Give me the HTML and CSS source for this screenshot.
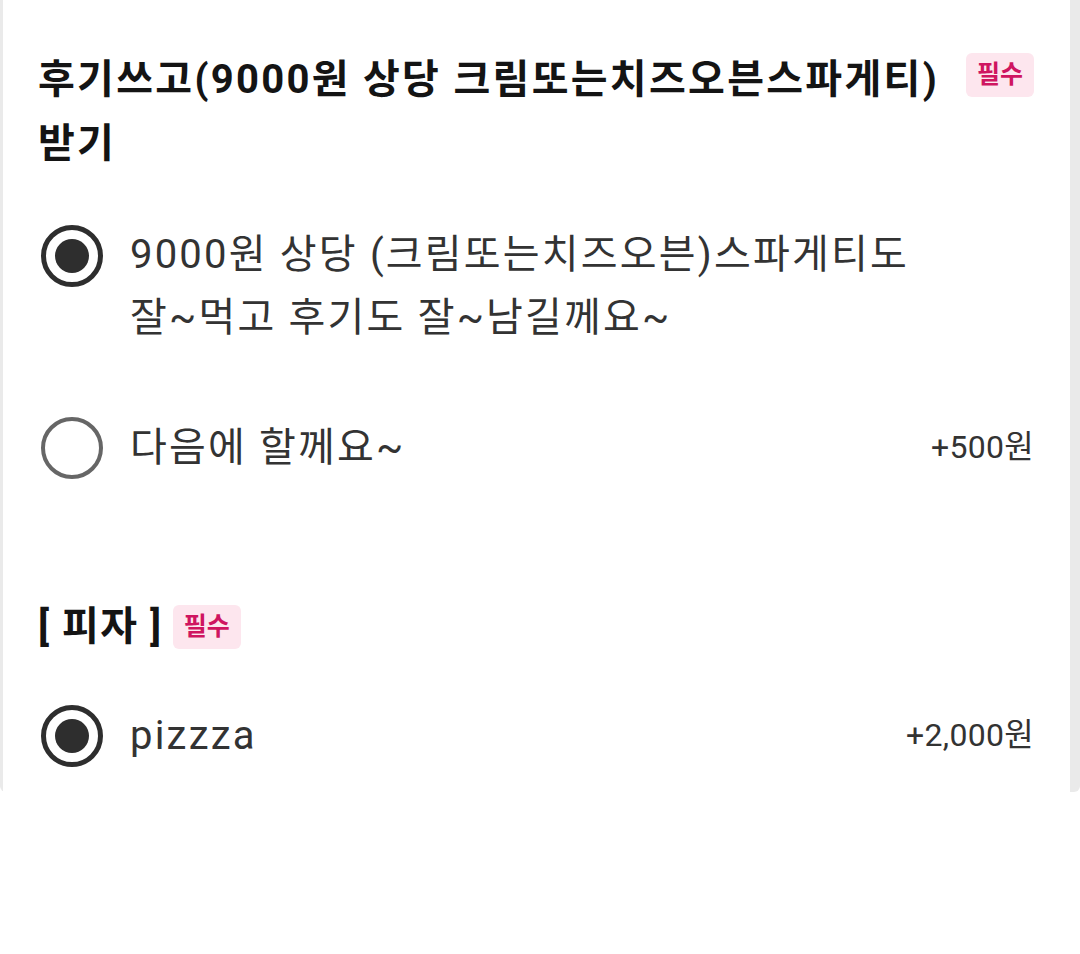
FILE: index.html
```html
<!DOCTYPE html>
<html lang="ko">
<head>
<meta charset="utf-8">
<link rel="stylesheet" href="styles.css">
</head>
<body>
<div class="frame">
  <div class="card">
    <section class="group group-first">
      <div class="group-head">
        <h2 class="group-title">후기쓰고(9000원 상당 크림또는치즈오븐스파게티) 받기</h2>
        <span class="badge">필수</span>
      </div>
      <ul class="options">
        <li class="option option-tall">
          <span class="radio checked"></span>
          <span class="option-label">9000원 상당 (크림또는치즈오븐)스파게티도<br>잘~먹고 후기도 잘~남길께요~</span>
        </li>
        <li class="option option-second">
          <span class="radio"></span>
          <span class="option-label">다음에 할께요~</span>
          <span class="price">+500원</span>
        </li>
      </ul>
    </section>
    <section class="group group-second">
      <div class="group-head">
        <h2 class="group-title group-title-short">[ 피자 ]</h2>
        <span class="badge badge-inline">필수</span>
      </div>
      <ul class="options">
        <li class="option option-pizza">
          <span class="radio checked"></span>
          <span class="option-label">pizzza</span>
          <span class="price">+2,000원</span>
        </li>
      </ul>
    </section>
  </div>
</div>
</body>
</html>
```

FILE: styles.css
```css
html, body {
  margin: 0;
  padding: 0;
  background: #ffffff;
}

body {
  font-family: Roboto, "Noto Sans CJK KR", "Noto Sans", sans-serif;
  color: #333333;
}

.frame {
  background: #eaeaea;
  padding: 0 10px 0 3px;
  height: 792px;
  border-radius: 0 0 6px 6px;
  display: flex;
}

.card {
  flex: 1;
  background: #ffffff;
  padding: 0 36px 0 35px;
}

.group-first {
  padding-top: 48px;
}

.group-head {
  display: flex;
  align-items: flex-start;
}

.group-title {
  margin: 0;
  flex: 1;
  font-size: 40px;
  font-weight: 700;
  line-height: 64px;
  letter-spacing: 2.3px;
  color: #141414;
  padding-right: 20px;
  word-break: keep-all;
}

.group-title-short {
  flex: 0 0 auto;
  padding-right: 10px;
  letter-spacing: 1.5px;
}

.badge {
  flex: 0 0 auto;
  margin-top: 5px;
  background: #fde6ee;
  color: #cf1560;
  font-size: 25px;
  font-weight: 700;
  line-height: 44px;
  height: 44px;
  padding: 0 11px;
  border-radius: 6px;
}

.badge-inline {
  margin-top: 10px;
}

.options {
  list-style: none;
  margin: 0;
  padding: 0;
}

.option {
  display: flex;
  align-items: center;
  font-size: 40px;
  line-height: 63px;
  letter-spacing: 2.2px;
}

.option-tall {
  align-items: flex-start;
  margin-top: 47px;
}

.option-tall .radio {
  margin-top: 2px;
}

.option-second {
  margin-top: 67px;
}

.option-pizza {
  margin-top: 45px;
}

.radio {
  flex: 0 0 auto;
  width: 62px;
  height: 62px;
  box-sizing: border-box;
  border: 4px solid #666666;
  border-radius: 50%;
  margin-left: 3px;
  margin-right: 27px;
  display: flex;
  align-items: center;
  justify-content: center;
}

.radio.checked {
  border: 5px solid #2e2e2e;
}

.radio.checked::after {
  content: "";
  width: 34px;
  height: 34px;
  border-radius: 50%;
  background: #2e2e2e;
}

.option-label {
  flex: 1;
  color: #333333;
}

.price {
  flex: 0 0 auto;
  font-size: 32px;
  letter-spacing: 0.3px;
  color: #333333;
}

.group-second {
  margin-top: 116px;
}
```
